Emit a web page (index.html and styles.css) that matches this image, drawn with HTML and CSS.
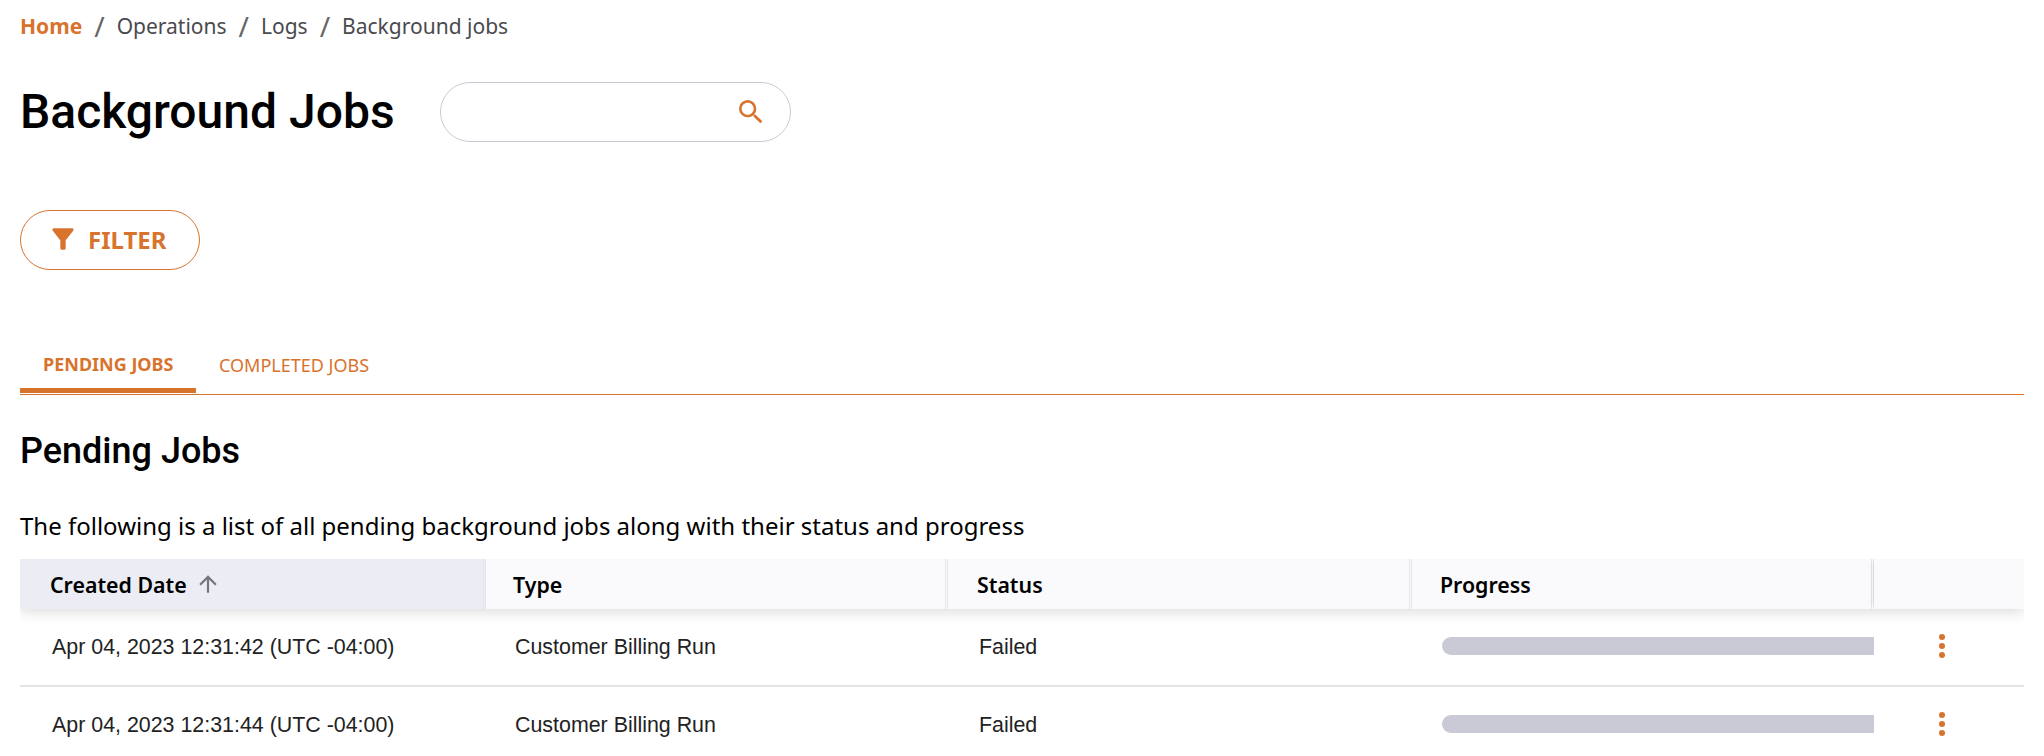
FILE: index.html
```html
<!DOCTYPE html>
<html lang="en">
<head>
<meta charset="utf-8">
<title>Background Jobs</title>
<link rel="stylesheet" href="styles.css">
</head>
<body>
<main class="page">
  <nav class="crumbs">
    <a class="crumb-home">Home</a><span class="sep">/</span>
    <a class="crumb">Operations</a><span class="sep">/</span>
    <a class="crumb">Logs</a><span class="sep">/</span>
    <a class="crumb">Background jobs</a>
  </nav>
  <header class="title-row">
    <h1>Background Jobs</h1>
    <div class="search">
      <svg class="search-icon" viewBox="0 0 24 24" width="32" height="32"><path d="M15.5 14h-.79l-.28-.27A6.47 6.47 0 0 0 16 9.5 6.5 6.5 0 1 0 9.5 16c1.61 0 3.09-.59 4.23-1.57l.27.28v.79l5 4.99L20.49 19l-4.99-5zm-6 0C7.01 14 5 11.99 5 9.5S7.01 5 9.5 5 14 7.01 14 9.5 11.99 14 9.5 14z"/></svg>
    </div>
  </header>
  <button class="filter">
    <svg class="filter-icon" viewBox="0 0 24 24" width="32" height="32"><path d="M4.25 5.61C6.27 8.2 10 13 10 13v6c0 .55.45 1 1 1h2c.55 0 1-.45 1-1v-6s3.72-4.8 5.74-7.39A.998.998 0 0 0 18.95 4H5.04c-.83 0-1.3.95-.79 1.61z"/></svg>
    FILTER
  </button>
  <div class="tabs">
    <a class="tab tab-active">PENDING JOBS</a>
    <a class="tab">COMPLETED JOBS</a>
  </div>
  <h2>Pending Jobs</h2>
  <p class="intro">The following is a list of all pending background jobs along with their status and progress</p>
  <section class="table">
    <div class="row head">
      <div class="th th-date th-sorted">Created Date
        <svg class="sort" viewBox="0 0 24 24" width="26" height="26"><path d="M4 12l1.41 1.41L11 7.83V20h2V7.83l5.58 5.59L20 12l-8-8-8 8z"/></svg>
      </div>
      <div class="th th-type">Type</div>
      <div class="th th-status">Status</div>
      <div class="th th-progress">Progress</div>
      <div class="th th-actions"></div>
    </div>
    <div class="row body">
      <div class="td td-date">Apr 04, 2023 12:31:42 (UTC -04:00)</div>
      <div class="td td-type">Customer Billing Run</div>
      <div class="td td-status">Failed</div>
      <div class="td td-progress"><div class="bar"></div></div>
      <div class="td td-actions"><span class="dots"><i></i><i></i><i></i></span></div>
    </div>
    <div class="row body">
      <div class="td td-date">Apr 04, 2023 12:31:44 (UTC -04:00)</div>
      <div class="td td-type">Customer Billing Run</div>
      <div class="td td-status">Failed</div>
      <div class="td td-progress"><div class="bar"></div></div>
      <div class="td td-actions"><span class="dots"><i></i><i></i><i></i></span></div>
    </div>
  </section>
</main>
</body>
</html>
```
FILE: styles.css
```css
* { box-sizing: border-box; }
html, body { margin: 0; height: 756px; overflow: hidden; background: #fff; }
body { font-family: "Noto Sans", sans-serif; color: #000; }
.page { padding: 0 20px; }

.crumbs { display: flex; align-items: center; height: 52px; font-size: 21px; color: #4a4a4f; }
.crumb-home { font-weight: 700; color: #d8732e; }
.sep { margin: 0 12px; font-size: 28px; color: #666; }

.title-row { display: flex; align-items: center; height: 60px; margin-top: 30px; }
h1 { margin: 0; font: 500 48px/60px Roboto, sans-serif; }
.search { display: flex; align-items: center; justify-content: flex-end; width: 351px; height: 60px; margin-left: 45px; padding-right: 23px; border: 1px solid #c9cad6; border-radius: 30px; }
.search-icon { fill: #d8732e; }

.filter { display: flex; align-items: center; gap: 9px; width: 180px; height: 60px; margin-top: 68px; padding: 0 0 2px 26px; background: #fff; border: 1px solid #d8732e; border-radius: 30px; font: 700 24px "Noto Sans", sans-serif; color: #d8732e; }
.filter-icon { fill: #d8732e; }

.tabs { display: flex; height: 57px; margin-top: 68px; border-bottom: 1px solid #d8732e; }
.tab { display: flex; align-items: center; height: 55px; padding: 0 23px 2px; font-size: 18px; white-space: nowrap; color: #d8732e; }
.tab-active { width: 176px; font-weight: 700; border-bottom: 5px solid #d8732e; padding-top: 2px; padding-bottom: 0; }

h2 { margin: 34px 0 0; font: 500 36px/44px Roboto, sans-serif; }
.intro { margin: 37px 0 0; font-size: 24px; line-height: 32px; }

.table { margin-top: 17px; overflow: hidden; }
.row { display: grid; grid-template-columns: 466px 462px 464px 462px 150px; }
.head { position: relative; z-index: 1; background: #fafafc; box-shadow: 0 2px 14px rgba(0,0,0,.16); }
.th { display: flex; align-items: center; gap: 8px; height: 50px; background: #fafafc; font-size: 21.33px; font-weight: 600; border-right: 3px double #e6e6ea; }
.th-sorted { background: #ebecf4; }
.th-date { padding-left: 30px; }
.th-type { padding-left: 27px; }
.th-status { padding-left: 29px; }
.th-progress { padding-left: 28px; }
.th-actions { height: 49px; border-right: 0; box-shadow: -4px 0 6px -3px rgba(0,0,0,.08); }
.sort { fill: #75757a; }
.td { display: flex; align-items: center; height: 78px; font: 21.4px "Liberation Sans", sans-serif; color: #222; border-bottom: 2px solid #e4e4e8; }
.td-date { padding-left: 32px; }
.td-type { padding-left: 29px; }
.td-status { padding-left: 31px; }
.td-progress { padding: 0 0 2px 30px; }
.bar { flex: 1; height: 18px; border-radius: 9px 0 0 9px; background: #c9cad6; }
.td-actions { justify-content: center; padding: 0 15px 2px 0; }
.dots { display: flex; flex-direction: column; gap: 3px; }
.dots i { width: 6px; height: 6px; border-radius: 50%; background: #d8732e; }
```
